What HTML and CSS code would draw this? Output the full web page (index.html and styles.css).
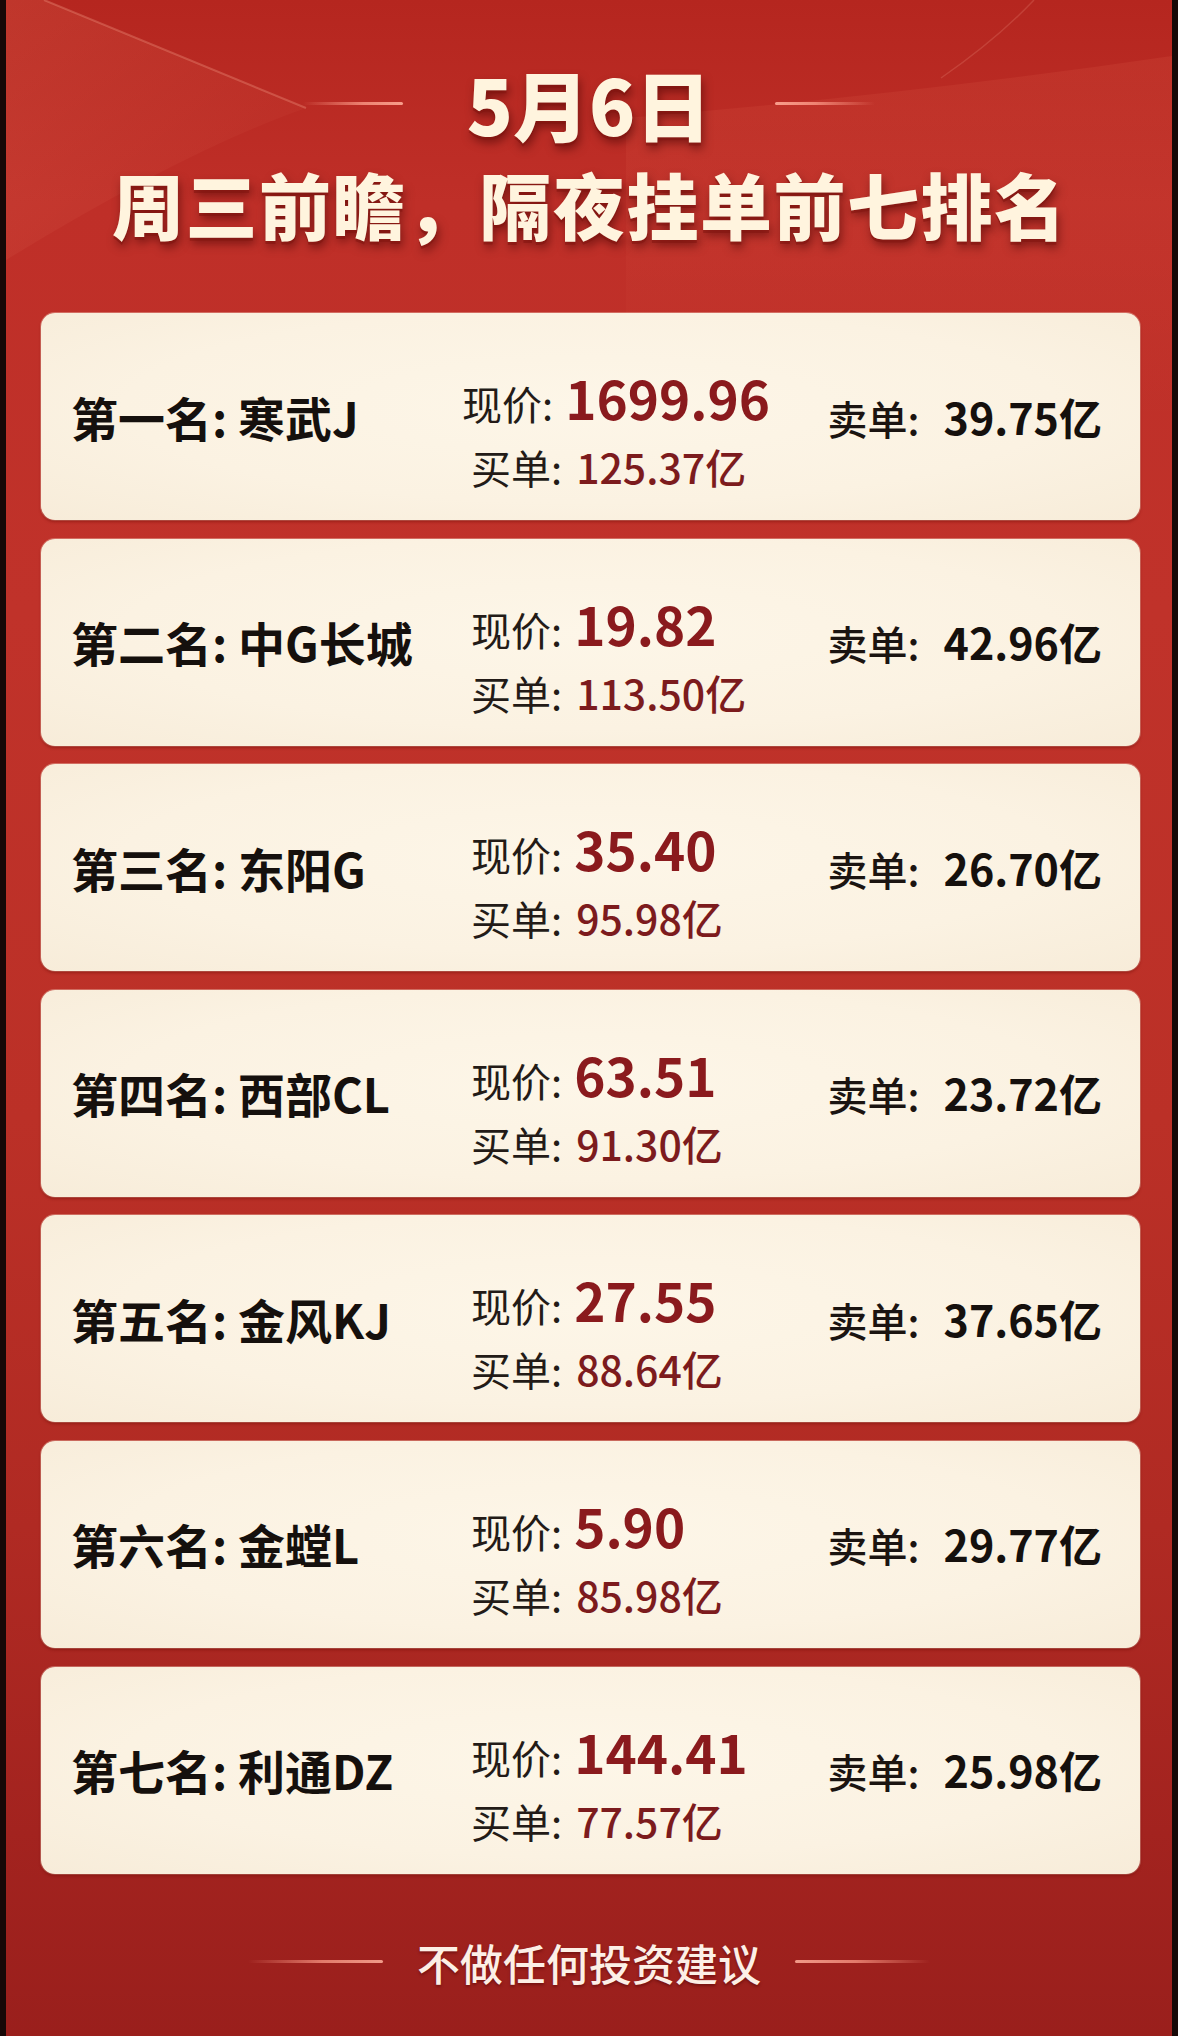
FILE: index.html
```html
<!DOCTYPE html>
<html lang="zh-CN">
<head>
<meta charset="utf-8">
<title>隔夜挂单前七排名</title>
<link rel="stylesheet" href="styles.css">
</head>
<body>
<div class="page">
  <svg class="deco" width="1166" height="420" viewBox="0 0 1166 420" aria-hidden="true">
    <defs>
      <linearGradient id="fadeL" x1="0" y1="0" x2="1" y2="1">
        <stop offset="0" stop-color="#ff9a7a" stop-opacity="0.14"/>
        <stop offset="1" stop-color="#ff9a7a" stop-opacity="0"/>
      </linearGradient>
      <linearGradient id="fadeR" x1="0" y1="0" x2="0" y2="1">
        <stop offset="0" stop-color="#ff8a6a" stop-opacity="0.1"/>
        <stop offset="1" stop-color="#ff8a6a" stop-opacity="0"/>
      </linearGradient>
    </defs>
    <path d="M0 0 L38 0 Q170 55 300 108 Q180 150 0 260 Z" fill="url(#fadeL)"/>
    <path d="M38 0 Q170 55 300 108" fill="none" stroke="#ffb39a" stroke-opacity="0.28" stroke-width="2"/>
    <path d="M1028 0 Q990 40 935 78" fill="none" stroke="#ffb7a2" stroke-opacity="0.18" stroke-width="1.5"/>
    <path d="M620 118 Q900 95 1166 56 L1166 420 L620 420 Z" fill="url(#fadeR)"/>
  </svg>

  <header class="head">
    <div class="date-row">
      <span class="rule rule-l"></span>
      <h1 class="date">5月6日</h1>
      <span class="rule rule-r"></span>
    </div>
    <h2 class="subtitle">周三前瞻，隔夜挂单前七排名</h2>
  </header>

  <main class="list">
    <section class="card">
      <div class="name">第一名: 寒武J</div>
      <div class="mid">
        <div class="price-row price-row-long"><span class="lbl">现价:</span><span class="price">1699.96</span></div>
        <div class="buy-row"><span class="lbl">买单:</span><span class="buy">125.37亿</span></div>
      </div>
      <div class="sell"><span class="lbl">卖单:</span><span class="sellv">39.75亿</span></div>
    </section>

    <section class="card">
      <div class="name">第二名: 中G长城</div>
      <div class="mid">
        <div class="price-row"><span class="lbl">现价:</span><span class="price">19.82</span></div>
        <div class="buy-row"><span class="lbl">买单:</span><span class="buy">113.50亿</span></div>
      </div>
      <div class="sell"><span class="lbl">卖单:</span><span class="sellv">42.96亿</span></div>
    </section>

    <section class="card">
      <div class="name">第三名: 东阳G</div>
      <div class="mid">
        <div class="price-row"><span class="lbl">现价:</span><span class="price">35.40</span></div>
        <div class="buy-row"><span class="lbl">买单:</span><span class="buy">95.98亿</span></div>
      </div>
      <div class="sell"><span class="lbl">卖单:</span><span class="sellv">26.70亿</span></div>
    </section>

    <section class="card">
      <div class="name">第四名: 西部CL</div>
      <div class="mid">
        <div class="price-row"><span class="lbl">现价:</span><span class="price">63.51</span></div>
        <div class="buy-row"><span class="lbl">买单:</span><span class="buy">91.30亿</span></div>
      </div>
      <div class="sell"><span class="lbl">卖单:</span><span class="sellv">23.72亿</span></div>
    </section>

    <section class="card">
      <div class="name">第五名: 金风KJ</div>
      <div class="mid">
        <div class="price-row"><span class="lbl">现价:</span><span class="price">27.55</span></div>
        <div class="buy-row"><span class="lbl">买单:</span><span class="buy">88.64亿</span></div>
      </div>
      <div class="sell"><span class="lbl">卖单:</span><span class="sellv">37.65亿</span></div>
    </section>

    <section class="card">
      <div class="name">第六名: 金螳L</div>
      <div class="mid">
        <div class="price-row"><span class="lbl">现价:</span><span class="price">5.90</span></div>
        <div class="buy-row"><span class="lbl">买单:</span><span class="buy">85.98亿</span></div>
      </div>
      <div class="sell"><span class="lbl">卖单:</span><span class="sellv">29.77亿</span></div>
    </section>

    <section class="card">
      <div class="name">第七名: 利通DZ</div>
      <div class="mid">
        <div class="price-row"><span class="lbl">现价:</span><span class="price">144.41</span></div>
        <div class="buy-row"><span class="lbl">买单:</span><span class="buy">77.57亿</span></div>
      </div>
      <div class="sell"><span class="lbl">卖单:</span><span class="sellv">25.98亿</span></div>
    </section>
  </main>

  <footer class="foot">
    <span class="frule frule-l"></span>
    <span class="foot-text">不做任何投资建议</span>
    <span class="frule frule-r"></span>
  </footer>
</div>
</body>
</html>
```

FILE: styles.css
```css
html, body {
  margin: 0;
  padding: 0;
  background: #120606;
}

.page {
  position: relative;
  width: 1178px;
  height: 2036px;
  box-sizing: border-box;
  border-left: 6px solid #170807;
  border-right: 6px solid #170807;
  padding-top: 54px;
  overflow: hidden;
  font-family: "Noto Sans CJK SC", "Noto Sans", sans-serif;
  background: linear-gradient(180deg,
    #b5261f 0%,
    #bf2f28 10%,
    #c0322a 30%,
    #bb3027 55%,
    #b02a23 75%,
    #a3231f 90%,
    #9a1f1c 100%);
}

.deco {
  position: absolute;
  top: 0;
  left: 0;
  z-index: 0;
}

.head,
.list,
.foot {
  position: relative;
  z-index: 1;
}

/* ---------- header ---------- */
.date-row {
  height: 99px;
  display: flex;
  justify-content: center;
  align-items: center;
  gap: 64px;
}

.rule {
  width: 100px;
  height: 3px;
  border-radius: 2px;
}

.rule-l {
  background: linear-gradient(90deg, rgba(255, 150, 130, 0) 0%, rgba(255, 160, 140, 0.75) 60%, rgba(255, 170, 150, 0.9) 100%);
}

.rule-r {
  background: linear-gradient(90deg, rgba(255, 170, 150, 0.9) 0%, rgba(255, 160, 140, 0.75) 40%, rgba(255, 150, 130, 0) 100%);
}

.date {
  margin: 0;
  font-size: 76px;
  line-height: 99px;
  font-weight: 900;
  color: #fff4de;
  text-shadow: 0 3px 0 rgba(130, 20, 15, 0.55), 2px 6px 10px rgba(60, 0, 0, 0.5);
}

.subtitle {
  margin: 0;
  height: 99px;
  font-size: 72px;
  line-height: 99px;
  font-weight: 900;
  letter-spacing: 1.5px;
  padding-left: 1.5px;
  text-align: center;
  white-space: nowrap;
  color: #fff4de;
  text-shadow: 0 3px 0 rgba(130, 20, 15, 0.55), 2px 6px 10px rgba(60, 0, 0, 0.5);
}

/* ---------- list ---------- */
.list {
  margin: 61px 32px 0 35px;
  display: flex;
  flex-direction: column;
  gap: 18.6px;
}

.card {
  height: 207px;
  box-sizing: border-box;
  padding: 0 38px 0 30px;
  border-radius: 14px;
  background: radial-gradient(ellipse at 50% 45%, #fdf6e8 0%, #fbf2e2 60%, #f7ecd9 100%);
  box-shadow: 0 2px 3px rgba(110, 10, 5, 0.45), 0 0 0 1px rgba(255, 230, 210, 0.35);
  display: grid;
  grid-template-columns: 400px 1fr auto;
  align-items: center;
  color: #17110e;
}

.name {
  font-size: 47px;
  line-height: 60px;
  font-weight: 700;
  white-space: nowrap;
  color: #15100d;
}

.mid {
  align-self: start;
  margin-top: 58px;
  font-size: 40px;
}

.price-row {
  height: 66px;
  display: flex;
  align-items: baseline;
  line-height: 1;
  white-space: nowrap;
}

.price-row-long {
  margin-left: -9px;
}

.lbl {
  font-size: 40px;
  font-weight: 400;
  color: #231b17;
}

.price-row .lbl {
  margin-right: 12px;
}

.price {
  font-size: 53px;
  font-weight: 700;
  color: #8a1a1d;
}

.buy-row {
  height: 66px;
  margin-top: -4px;
  line-height: 66px;
  white-space: nowrap;
}

.buy-row .lbl {
  margin-right: 14px;
}

.buy {
  font-size: 41px;
  font-weight: 500;
  color: #7c1b1d;
}

.sell {
  font-size: 40px;
  line-height: 60px;
  white-space: nowrap;
}

.sell .lbl {
  font-size: 40px;
  font-weight: 500;
  color: #1b1411;
  margin-right: 24px;
}

.sellv {
  font-size: 43px;
  font-weight: 700;
  color: #15100d;
}

/* ---------- footer ---------- */
.foot {
  margin-top: 58px;
  height: 60px;
  display: flex;
  justify-content: center;
  align-items: center;
  gap: 34px;
}

.frule {
  width: 135px;
  height: 3px;
  border-radius: 2px;
}

.frule-l {
  background: linear-gradient(90deg, rgba(255, 140, 120, 0) 0%, rgba(255, 160, 140, 0.7) 55%, rgba(255, 175, 155, 0.85) 100%);
}

.frule-r {
  background: linear-gradient(90deg, rgba(255, 175, 155, 0.85) 0%, rgba(255, 160, 140, 0.7) 45%, rgba(255, 140, 120, 0) 100%);
}

.foot-text {
  font-size: 43px;
  line-height: 60px;
  font-weight: 500;
  color: #fcefe6;
  text-shadow: 0 2px 3px rgba(70, 0, 0, 0.45);
}
```
